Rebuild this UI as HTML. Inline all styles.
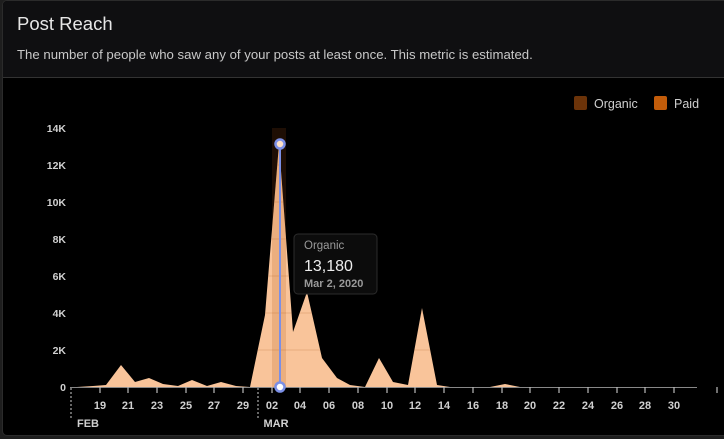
<!DOCTYPE html>
<html><head><meta charset="utf-8"><style>
html,body{margin:0;padding:0;background:#1e1e1e;width:724px;height:439px;overflow:hidden;font-family:"Liberation Sans",sans-serif}
.panel{position:absolute;left:2px;top:0;width:730px;height:434px;background:#000;border:1px solid #2b2b2b;border-radius:5px;overflow:hidden}
.hdr{position:absolute;left:0;top:0;right:0;height:76px;background:#0f0f11;border-bottom:1px solid #333}
.t{position:absolute;left:14px;top:12px;color:#e6e6e6;font-size:18.5px}
.s{position:absolute;left:14px;top:46px;color:#c8c8c8;font-size:13.2px}
</style></head><body>
<div class="panel">
<div class="hdr"><div class="t">Post Reach</div><div class="s">The number of people who saw any of your posts at least once. This metric is estimated.</div></div>
</div>
<svg width="724" height="439" style="position:absolute;left:0;top:0" font-family="Liberation Sans, sans-serif">
<defs><clipPath id="c"><polygon id="a" points="77,387 93,386 106,385 121,365 135,382 149,378 163,384 178,386 192,380 207,386 221,382 236,386 250,387 265,315 279,144 293,332 307,292 322,358 337,378 350,385 365,387 379,358 393,382 408,385 422,308 437,385 450,387 490,387 505,384 520,387 697,387"/></clipPath></defs>
<rect x="574" y="96" width="13" height="14" rx="2" fill="#6b3309"/>
<text x="594" y="108" fill="#cfcfcf" font-size="12.5">Organic</text>
<rect x="654" y="96" width="13" height="14" rx="2" fill="#c25c0a"/>
<text x="674" y="108" fill="#cfcfcf" font-size="12.5">Paid</text>
<g fill="#d0d0d0" font-size="10.5" font-weight="bold" text-anchor="end">
<text x="66" y="132">14K</text><text x="66" y="169">12K</text><text x="66" y="206">10K</text>
<text x="66" y="243">8K</text><text x="66" y="280">6K</text><text x="66" y="317">4K</text>
<text x="66" y="354">2K</text><text x="66" y="391">0</text></g>
<rect x="272" y="128" width="14" height="259" fill="#1e0e04"/>
<polygon fill="#f9c49a" points="77,387 93,386 106,385 121,365 135,382 149,378 163,384 178,386 192,380 207,386 221,382 236,386 250,387 265,315 279,144 293,332 307,292 322,358 337,378 350,385 365,387 379,358 393,382 408,385 422,308 437,385 450,387 490,387 505,384 520,387 697,387"/>
<g clip-path="url(#c)" stroke="#c8824a" stroke-opacity="0.35" stroke-width="1"><line x1="70" y1="350" x2="697" y2="350"/><line x1="70" y1="313" x2="697" y2="313"/><line x1="70" y1="276" x2="697" y2="276"/><line x1="70" y1="239" x2="697" y2="239"/><line x1="70" y1="202" x2="697" y2="202"/><line x1="70" y1="165" x2="697" y2="165"/></g>
<rect x="272" y="128" width="14" height="259" fill="#b35a10" fill-opacity="0.2" clip-path="url(#c)"/>
<line x1="70" y1="387.5" x2="697" y2="387.5" stroke="#888" stroke-width="1"/>
<g stroke="#bbb" stroke-width="1.2">
<line x1="100" y1="387" x2="100" y2="393"/><line x1="128" y1="387" x2="128" y2="393"/><line x1="157" y1="387" x2="157" y2="393"/><line x1="186" y1="387" x2="186" y2="393"/><line x1="214" y1="387" x2="214" y2="393"/><line x1="243" y1="387" x2="243" y2="393"/><line x1="272" y1="387" x2="272" y2="393"/><line x1="300" y1="387" x2="300" y2="393"/><line x1="329" y1="387" x2="329" y2="393"/><line x1="358" y1="387" x2="358" y2="393"/><line x1="387" y1="387" x2="387" y2="393"/><line x1="415" y1="387" x2="415" y2="393"/><line x1="444" y1="387" x2="444" y2="393"/><line x1="473" y1="387" x2="473" y2="393"/><line x1="502" y1="387" x2="502" y2="393"/><line x1="530" y1="387" x2="530" y2="393"/><line x1="559" y1="387" x2="559" y2="393"/><line x1="588" y1="387" x2="588" y2="393"/><line x1="617" y1="387" x2="617" y2="393"/><line x1="645" y1="387" x2="645" y2="393"/><line x1="674" y1="387" x2="674" y2="393"/><line x1="717" y1="387" x2="717" y2="393"/>
</g>
<g stroke="#aaa" stroke-width="1.2" stroke-dasharray="2,2"><line x1="71" y1="388" x2="71" y2="418"/><line x1="258" y1="388" x2="258" y2="418"/></g>
<g fill="#d0d0d0" font-size="11" font-weight="bold" text-anchor="middle">
<text x="100" y="409">19</text><text x="128" y="409">21</text><text x="157" y="409">23</text><text x="186" y="409">25</text><text x="214" y="409">27</text><text x="243" y="409">29</text><text x="272" y="409">02</text><text x="300" y="409">04</text><text x="329" y="409">06</text><text x="358" y="409">08</text><text x="387" y="409">10</text><text x="415" y="409">12</text><text x="444" y="409">14</text><text x="473" y="409">16</text><text x="502" y="409">18</text><text x="530" y="409">20</text><text x="559" y="409">22</text><text x="588" y="409">24</text><text x="617" y="409">26</text><text x="645" y="409">28</text><text x="674" y="409">30</text>
<text x="88" y="427">FEB</text><text x="276" y="427">MAR</text></g>
<line x1="280" y1="144" x2="280" y2="387" stroke="#7b8fe6" stroke-width="2"/>
<circle cx="280" cy="144" r="4.5" fill="#fde0c8" stroke="#7b8fe6" stroke-width="2.5"/>
<circle cx="280" cy="387" r="4.5" fill="#fff" stroke="#7b8fe6" stroke-width="2.5"/>
<rect x="294" y="234" width="83" height="60" rx="4" fill="#0c0c0c" stroke="#2c2c2c"/>
<text x="304" y="249" fill="#9a9a9a" font-size="11.5">Organic</text>
<text x="304" y="271" fill="#eee" font-size="16">13,180</text>
<text x="304" y="287" fill="#9a9a9a" font-size="11" font-weight="bold">Mar 2, 2020</text>
</svg>
</body></html>
